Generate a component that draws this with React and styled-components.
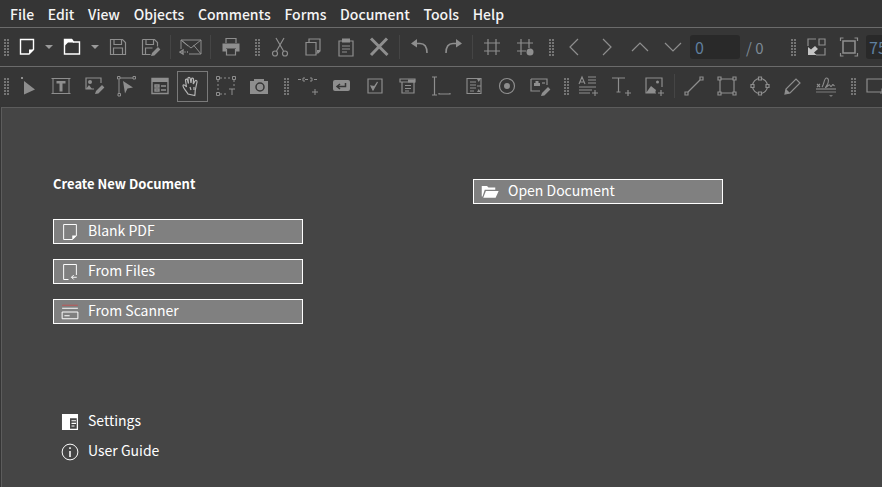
import React from 'react';
import styled, { createGlobalStyle } from 'styled-components';

const GlobalStyle = createGlobalStyle`
	html, body {
		margin: 0;
		padding: 0;
		height: 100%;
		overflow: hidden;
		background: #353535;
	}
	#root {
		height: 100%;
	}
`;

const Window = styled.div`
	display: flex;
	flex-direction: column;
	height: 100vh;
	font-family: "Noto Sans CJK SC", "Noto Sans", sans-serif;
	color: #fff;
	overflow: hidden;
`;

const MenuBar = styled.div`
	display: flex;
	align-items: center;
	gap: 13.7px;
	height: 27px;
	padding-left: 10px;
	font-size: 14px;
	font-weight: 500;
	color: #f4f4f4;
`;

const ToolRow = styled.div`
	display: flex;
	align-items: center;
	flex: none;
	height: 38px;
	border-top: 1px solid #6b6b6b;
	background: #363636;
	white-space: nowrap;
`;

const ToolButton = styled.div`
	display: flex;
	flex: none;
	align-items: center;
	justify-content: center;
	box-sizing: border-box;
	width: ${props => props.$active ? 31 : props.$w || 33}px;
	height: 31px;
	margin: 0 ${props => props.$active ? 1 : 0}px;
	border: 1px solid ${props => props.$active ? '#7a7a7a' : 'transparent'};
`;

const Handle = styled.div`
	flex: none;
	width: 5px;
	height: 17px;
	margin: 0 ${props => props.$right || 0}px 0 ${props => props.$left || 0}px;
	background-image: linear-gradient(90deg, #757575 66%, transparent 66%);
	background-size: 3px 100%;
	mask-image: linear-gradient(#000 66%, transparent 66%);
	mask-size: 100% 3px;
`;

const Divider = styled.div`
	flex: none;
	width: 1px;
	height: 24px;
	margin: 0 ${props => props.$right || 4}px 0 ${props => props.$left || 4}px;
	background: #454545;
`;

const PageBox = styled.div`
	display: flex;
	flex: none;
	align-items: center;
	box-sizing: border-box;
	width: ${props => props.$w}px;
	height: 24px;
	margin-left: ${props => props.$left || 0}px;
	padding-left: ${props => props.$pad || 5}px;
	border-radius: 3px;
	background: #292929;
	color: #5f7f9f;
	font-size: 16px;
`;

const PageTotal = styled.div`
	flex: none;
	width: 48px;
	padding-left: 6px;
	box-sizing: border-box;
	color: #7d8a96;
	font-size: 15px;
`;

const Workspace = styled.div`
	display: flex;
	flex: 1;
	margin: 2px 0 0 1px;
	border-top: 1px solid #5c5c5c;
	border-left: 1px solid #5c5c5c;
	background: #454545;
`;

const LeftColumn = styled.div`
	display: flex;
	flex-direction: column;
	width: 250px;
	margin-left: 51px;
	padding-top: 66px;
`;

const RightColumn = styled.div`
	width: 250px;
	margin-left: 170px;
	padding-top: 71px;
`;

const Heading = styled.div`
	height: 20px;
	margin-bottom: 25px;
	font-size: 13px;
	font-weight: 700;
	line-height: 20px;
`;

const StartList = styled.div`
	display: flex;
	flex-direction: column;
	gap: 15px;
`;

const StartButton = styled.div`
	display: flex;
	align-items: center;
	box-sizing: border-box;
	height: 25px;
	padding: 0 0 3px 7px;
	border: 1px solid #fff;
	background: #808080;
	font-size: 14px;
`;

const StartIcon = styled.span`
	display: flex;
	flex: none;
	width: 27px;
	margin-top: 3px;
`;

const LinkList = styled.div`
	display: flex;
	flex-direction: column;
	gap: 10px;
	margin-top: 86px;
	padding-left: 8px;
`;

const LinkRow = styled.div`
	display: flex;
	align-items: center;
	height: 20px;
	font-size: 14px;
`;

const Svg = ({ children, size = 24, color = '#8e8e8e', width = 1.2 }) => (
	<svg width={size} height={size} viewBox="0 0 24 24" fill="none" stroke={color} strokeWidth={width}>
		{children}
	</svg>
);

const White = ({ children }) => <Svg color="#fff" size={18} width={1.3}>{children}</Svg>;

const pencil = (x, y) => (
	<path d={`M${x} ${y + 7}l1-3 6-6 2.4 2.4-6 6z`} fill="#8e8e8e" stroke="none" />
);

const plus = (x, y) => <path d={`M${x - 3} ${y}h6M${x} ${y - 3}v6`} />;

const icons = {
	newDoc: (
		<Svg color="#fff" width={1.4}>
			<path d="M5.500 4.500h13v10l-4.500 4.500h-8.500z" />
			<path d="M14 19v-4.500h5z" fill="#fff" stroke="none" />
		</Svg>
	),
	folder: (
		<Svg color="#fff" width={1.4}>
			<path d="M4.500 4.500h7l2 2.500h6v12h-15z" />
			<path d="M4 4h8l2 3.500h-6l-4 4z" fill="#fff" stroke="none" />
		</Svg>
	),
	caret: (
		<svg width="10" height="6" viewBox="0 0 10 6">
			<path d="M1 1h8l-4 4z" fill="#9a9a9a" />
		</svg>
	),
	save: (
		<Svg>
			<path d="M4.500 4.500h12l3 3v12h-15z" />
			<path d="M8 4.500v5h7.500v-5M7.500 19.500v-6.500h9v6.500" />
		</Svg>
	),
	saveAs: (
		<Svg>
			<path d="M4.500 4.500h12l3 3v4M4.500 4.500v15h8" />
			<path d="M8 4.500v5h7.500v-5M7.500 19.500v-6.500h7" />
			{pencil(13, 14)}
		</Svg>
	),
	mail: (
		<Svg width={1}>
			<path d="M2 5h20v14h-12M2 5v9M2 5l10 8 10-8M22 19l-7.500-9M2 5l7 6" />
			<path d="M1 17l3-2v4zM5.500 17h1M8 17h1" strokeWidth="1.400" />
		</Svg>
	),
	print: (
		<Svg>
			<path d="M7 8v-4.500h10v4.500" />
			<path d="M3.500 8.500h17v8h-3.500v-3h-10v3h-3.500z" fill="#8e8e8e" stroke="none" />
			<path d="M7.500 14v6h9v-6" />
		</Svg>
	),
	cut: (
		<Svg>
			<path d="M8 3l7.500 13M16 3l-7.500 13" />
			<circle cx="7" cy="18.500" r="2.500" />
			<circle cx="17" cy="18.500" r="2.500" />
		</Svg>
	),
	copy: (
		<Svg>
			<path d="M8 7v-3h11v12l-2 2h-2" />
			<path d="M5 7.500h10v12.500h-10z" />
			<path d="M16 18l3-2v-1h-3z" fill="#8e8e8e" stroke="none" />
		</Svg>
	),
	paste: (
		<Svg>
			<path d="M8 6h-3v15h14v-15h-3" />
			<path d="M8 3.500h8v4h-8z" fill="#8e8e8e" stroke="none" />
			<path d="M8 11h8M8 14h8M8 17h5" />
		</Svg>
	),
	close: (
		<Svg width={3}>
			<path d="M4 3.500l16.500 16.500M20 3.500l-16 16.500" />
		</Svg>
	),
	undo: (
		<Svg width={1.6}>
			<path d="M8 8.500h4c4 0 7 3 7 9.500" />
			<path d="M9 4l-6 4.500 6 4z" fill="#8e8e8e" stroke="none" />
		</Svg>
	),
	redo: (
		<Svg width={1.6}>
			<path d="M16 8.500h-4c-4 0-7 3-7 9.500" />
			<path d="M15 4l6 4.500-6 4z" fill="#8e8e8e" stroke="none" />
		</Svg>
	),
	grid: (
		<Svg>
			<path d="M8 4v16M16 4v16M4 8h16M4 16h16" />
		</Svg>
	),
	gridDot: (
		<Svg>
			<path d="M8 4v16M16 4v9M4 8h16M4 16h9" />
			<circle cx="17" cy="17" r="3.500" fill="#8e8e8e" stroke="none" />
		</Svg>
	),
	left: <Svg><path d="M16 4l-8 8 8 8" /></Svg>,
	right: <Svg><path d="M8 4l8 8-8 8" /></Svg>,
	up: <Svg><path d="M4 16l8-8 8 8" /></Svg>,
	down: <Svg><path d="M4 8l8 8 8-8" /></Svg>,
	fitPage: (
		<Svg>
			<path d="M15 4h6v6h-6z" />
			<path d="M4 11v-7h8M21 13v7h-9" />
			<path d="M4 20v-8l3 2.500 4-3.500 3 3-4 3.500 2.500 2.500z" fill="#c4c4c4" stroke="none" />
		</Svg>
	),
	fitWidth: (
		<Svg>
			<path d="M6 6h12v12h-12z" strokeWidth="1.600" />
			<path d="M3.500 6v-3h3M17.500 3h3v3M3.500 18v3h3M17.500 21h3v-3" />
		</Svg>
	),
	select: (
		<Svg>
			<path d="M5 3h2v2h-2z" fill="#8e8e8e" stroke="none" />
			<path d="M8 7l11 8.500-11 5z" fill="#8e8e8e" stroke="none" />
		</Svg>
	),
	editText: (
		<Svg>
			<path d="M4 4v16M20 4v16M2.500 19.500h19M2.500 4.500h19" strokeWidth="1" />
			<path d="M7.500 7h9v2.500h-3v8h-3v-8h-3z" fill="#8e8e8e" stroke="none" />
		</Svg>
	),
	editImage: (
		<Svg>
			<path d="M12 15h-8v-11h15v5" />
			<circle cx="8" cy="8" r="2" fill="#8e8e8e" stroke="none" />
			<path d="M4 15l3-4 3 4z" fill="#8e8e8e" stroke="none" />
			{pencil(13, 13)}
		</Svg>
	),
	path: (
		<Svg width={1}>
			<path d="M5 4h13M4 5.500v14" />
			<path d="M2.500 2.500h2.500v2.500h-2.500zM18 2.500h2.500v2.500h-2.500zM3 19.500h2.500v2.500h-2.500z" />
			<path d="M8 7l10 6.500-5.500 1-2.500 5z" fill="#8e8e8e" stroke="none" />
		</Svg>
	),
	form: (
		<Svg width={1.4}>
			<path d="M4 4.500h16v15h-16z" />
			<path d="M4 4h16v4h-16z" fill="#8e8e8e" stroke="none" />
			<path d="M7 11h4v2h-4zM7 15h4v2h-4zM13 12h5M13 16h5" />
		</Svg>
	),
	hand: (
		<Svg color="#b4b4b4" width={1.2}>
			<path d="M7 20c-1.500-3-5-6-5-8s2-1 3.500 1l-1-6.500c-.3-1.600 1.600-2 2-.5l1 3.500-.5-5c-.1-1.500 2-1.500 2.200 0l.8 4.500.5-4c.2-1.400 2-1.200 2 .2l-.2 4.800 1.700-3c.8-1 2.200-.5 2 1l-1.700 8c-.3 1.500 0 3-.5 5.500z" />
			<path d="M10 16l-1-3M13 16v-3" />
		</Svg>
	),
	crop: (
		<Svg width={1}>
			<path d="M4 6v12M6 4h12M6 20h6M20 6v7" strokeDasharray="2 2" />
			<path d="M2.500 2.500h3v3h-3zM18.500 2.500h3v3h-3zM2.500 18.500h3v3h-3z" />
			<path d="M15 15h6M18 15v6" />
		</Svg>
	),
	camera: (
		<Svg>
			<path d="M3 7h4v-2h10v2h4v13h-18z" fill="#8e8e8e" stroke="none" />
			<circle cx="13" cy="13" r="4" fill="#8e8e8e" stroke="#363636" strokeWidth="1.500" />
		</Svg>
	),
	link: (
		<Svg width={1}>
			<path d="M1 5.500h3M6 4h2M6 7h2M6 4v3M8 5.500h3M13 4h2M13 7h2M15 4v3M17 5.500h3" />
			{plus(18, 18)}
		</Svg>
	),
	enter: (
		<Svg>
			<rect x="3" y="6" width="17" height="11" rx="2" fill="#8e8e8e" stroke="none" />
			<path d="M15.500 9v3.500h-8M10 10l-3 2.500 3 2.500" stroke="#363636" strokeWidth="1.500" />
		</Svg>
	),
	check: (
		<Svg>
			<path d="M5 5h14v14h-14z" />
			<path d="M8 12l2 4 4.500-8-3 4.500z" fill="#8e8e8e" stroke="#8e8e8e" />
		</Svg>
	),
	combo: (
		<Svg>
			<path d="M4 5h15v3h-15z" />
			<path d="M12 5.500h7v3h-7z" fill="#8e8e8e" stroke="none" />
			<path d="M6 8v11h12v-11M9 11.500h6M9 14.500h6M9 17h4" />
		</Svg>
	),
	caretField: (
		<Svg>
			<path d="M3 3h5M3 21h5M5.500 3v18" />
			<path d="M10 19v1h11v-1" />
		</Svg>
	),
	list: (
		<Svg width={1.1}>
			<path d="M5 4.500h14v15h-14z" />
			<path d="M8 8h6M8 11h6M8 14h6M8 17h4M15 12h4" />
			<path d="M15 5h3.500l-1.750 3zM15 18h3.500l-1.750-3z" fill="#8e8e8e" stroke="none" />
		</Svg>
	),
	radio: (
		<Svg>
			<circle cx="12" cy="12" r="7.500" />
			<circle cx="12" cy="12" r="3" fill="#8e8e8e" stroke="none" />
		</Svg>
	),
	sign: (
		<Svg>
			<path d="M3 5h16v6M3 5v12h9" />
			<path d="M6 12v-3h6v3zM7.500 9v-2h3v2z" fill="#8e8e8e" stroke="none" />
			<path d="M14 9h3" />
			{pencil(13, 15)}
		</Svg>
	),
	textBlock: (
		<Svg width={1.1}>
			<path d="M3 10l3-7 3 7M4 8h4M12 3h8M12 6h8M12 9h8M3 13h17M3 16h13M3 19h11" />
			{plus(19, 19)}
		</Svg>
	),
	textAdd: (
		<Svg>
			<path d="M3 4h13M9.500 4v14M7.500 18h4" />
			{plus(19, 19)}
		</Svg>
	),
	imageAdd: (
		<Svg>
			<path d="M14 19h-10v-15h16v9" />
			<circle cx="15.500" cy="8" r="1.500" fill="#8e8e8e" stroke="none" />
			<path d="M4 19l5-7 5 4-1 3z" fill="#8e8e8e" stroke="none" />
			{plus(19, 19)}
		</Svg>
	),
	line: (
		<Svg>
			<path d="M6 18l12-12" />
			<path d="M3 18h3v3h-3zM18 3h3v3h-3z" />
		</Svg>
	),
	rect: (
		<Svg>
			<path d="M5 5h14v14h-14z" />
			<path d="M3 3h3v3h-3zM18 3h3v3h-3zM3 18h3v3h-3zM18 18h3v3h-3z" fill="#363636" />
		</Svg>
	),
	ellipse: (
		<Svg>
			<circle cx="12" cy="12" r="7.500" />
			<path d="M10.500 3h3v3h-3zM10.500 18h3v3h-3zM3 10.500h3v3h-3zM18 10.500h3v3h-3z" fill="#363636" />
		</Svg>
	),
	pencil: (
		<Svg>
			<path d="M4 20l1-5 10-10 4 4-10 10z" />
			<path d="M4 20l1-5 4 4z" fill="#8e8e8e" stroke="none" />
		</Svg>
	),
	signature: (
		<Svg width={1.1}>
			<path d="M2 15h20" />
			<path d="M2 18h20" stroke="#777" />
			<path d="M3 10l3 3M6 10l-3 3M8 13c2-2 2-9 4.500-9s2.500 4 .5 7-2 3 0 1.500 2-2.500 3-1 1 1.500 2 0 1-1 2.500.5" />
			<path d="M15 21h4l-2 2z" fill="#777" stroke="none" />
		</Svg>
	),
	note: (
		<Svg>
			<path d="M3 5h18v10h-3v3h-15z" />
			{plus(19, 19)}
		</Svg>
	),
	blankPdf: (
		<White>
			<path d="M3.500 2h17v15l-5 5h-12z" />
			<path d="M15 22v-5.500h6z" fill="#fff" stroke="none" />
		</White>
	),
	fromFiles: (
		<White>
			<path d="M10 22h-6.500v-20h17v14" />
			<path d="M21 19h-7M17 16l-3 3 3 3" />
		</White>
	),
	fromScanner: (
		<White>
			<path d="M1.500 3h21" stroke="#b55" />
			<path d="M1.500 7h21" />
			<path d="M1.500 12h21v9h-21zM4.500 17h7" />
		</White>
	),
	openFolder: (
		<svg width="18" height="18" viewBox="0 0 24 24" fill="#fff">
			<path d="M1 4h7l2 2h9v3h-14l-3 9h-1z" />
			<path d="M6.500 10.500h17l-4 9h-16.500z" />
		</svg>
	),
	settings: (
		<svg width="18" height="18" viewBox="0 0 24 24" fill="#fff" fillRule="evenodd">
			<path d="M1.300 1.300h21.400v21.400h-21.400zM12 7v14h9v-14z" />
			<path d="M14 9.500h6v1.500h-6zM14 13h6v1.500h-6zM14 16.500h4v1.500h-4z" />
		</svg>
	),
	info: (
		<White>
			<circle cx="12" cy="12" r="10.500" />
			<path d="M12 10.500v8" strokeWidth="2" />
			<path d="M12 5.500v2.500" strokeWidth="2" />
		</White>
	),
};

const Tool = ({ name, w, active }) => (
	<ToolButton $w={w} $active={active}>{icons[name]}</ToolButton>
);

const menus = ['File', 'Edit', 'View', 'Objects', 'Comments', 'Forms', 'Document', 'Tools', 'Help'];

const App = () => (
	<Window>
		<GlobalStyle />
		<MenuBar>
			{menus.map(m => <span key={m}>{m}</span>)}
		</MenuBar>

		<ToolRow>
			<Handle $left={4} $right={1} />
			<Tool name="newDoc" />
			<Tool name="caret" w={12} />
			<Tool name="folder" />
			<Tool name="caret" w={13} />
			<Tool name="save" />
			<Tool name="saveAs" w={32} />
			<Divider $left={4} $right={3} />
			<Tool name="mail" />
			<Divider $left={3} $right={4} />
			<Tool name="print" w={32} />
			<Handle $left={8} $right={3} />
			<Tool name="cut" />
			<Tool name="copy" />
			<Tool name="paste" />
			<Tool name="close" />
			<Divider $left={4} $right={3} />
			<Tool name="undo" />
			<Tool name="redo" />
			<Divider $left={3} $right={2} />
			<Tool name="grid" />
			<Tool name="gridDot" />
			<Handle $left={8} $right={3} />
			<Tool name="left" />
			<Tool name="right" />
			<Tool name="up" />
			<Tool name="down" />
			<PageBox $w={50} $left={1}>0</PageBox>
			<PageTotal>/ 0</PageTotal>
			<Handle $left={3} $right={3} />
			<Tool name="fitPage" />
			<Tool name="fitWidth" />
			<PageBox $w={60} $left={1} $pad={3}>75</PageBox>
		</ToolRow>

		<ToolRow>
			<Handle $left={4} $right={2} />
			<Tool name="select" />
			<Tool name="editText" />
			<Tool name="editImage" />
			<Tool name="path" />
			<Tool name="form" />
			<Tool name="hand" active />
			<Tool name="crop" />
			<Tool name="camera" />
			<Handle $left={9} $right={3} />
			<Tool name="link" />
			<Tool name="enter" />
			<Tool name="check" />
			<Tool name="combo" />
			<Tool name="caretField" />
			<Tool name="list" />
			<Tool name="radio" />
			<Tool name="sign" />
			<Handle $left={8} $right={2} />
			<Tool name="textBlock" />
			<Tool name="textAdd" />
			<Tool name="imageAdd" />
			<Divider $left={4} $right={2} />
			<Tool name="line" />
			<Tool name="rect" />
			<Tool name="ellipse" />
			<Tool name="pencil" />
			<Tool name="signature" />
			<Handle $left={9} $right={3} />
			<Tool name="note" />
		</ToolRow>

		<Workspace>
			<LeftColumn>
				<Heading>Create New Document</Heading>
				<StartList>
					<StartButton><StartIcon>{icons.blankPdf}</StartIcon>Blank PDF</StartButton>
					<StartButton><StartIcon>{icons.fromFiles}</StartIcon>From Files</StartButton>
					<StartButton><StartIcon>{icons.fromScanner}</StartIcon>From Scanner</StartButton>
				</StartList>
				<LinkList>
					<LinkRow><StartIcon>{icons.settings}</StartIcon>Settings</LinkRow>
					<LinkRow><StartIcon>{icons.info}</StartIcon>User Guide</LinkRow>
				</LinkList>
			</LeftColumn>
			<RightColumn>
				<StartButton><StartIcon>{icons.openFolder}</StartIcon>Open Document</StartButton>
			</RightColumn>
		</Workspace>
	</Window>
);

export default App;
